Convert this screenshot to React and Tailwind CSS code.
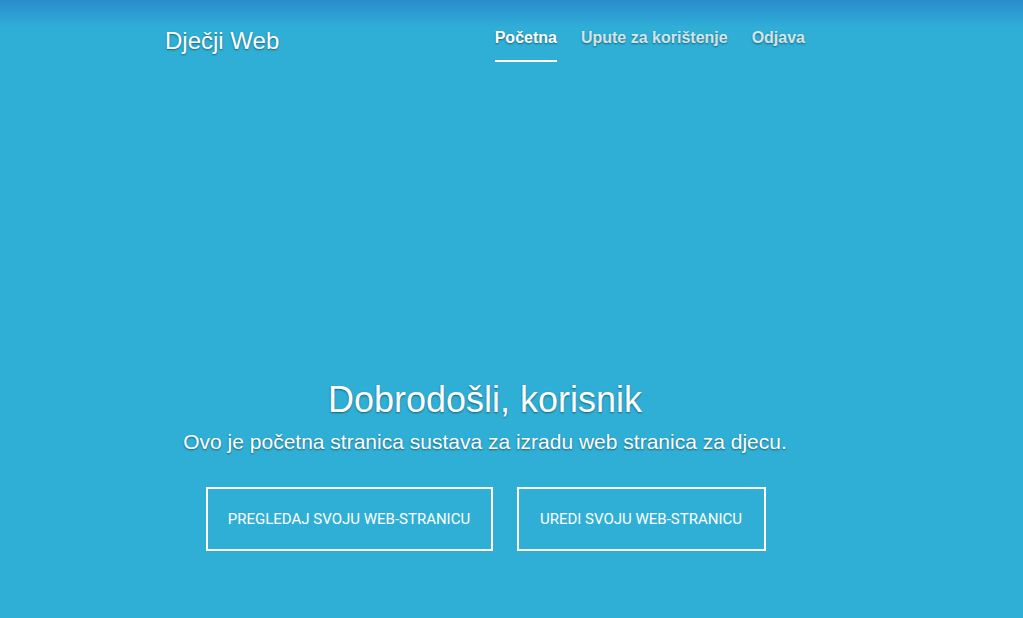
import React from "react";

// -------------------------------------

const navLinks = [
    { label: "Početna", active: true },
    { label: "Upute za korištenje", active: false },
    { label: "Odjava", active: false },
];

const App = () => {
    return (
        <div
            className="min-h-[618px] w-full bg-[#2fafd6] bg-[linear-gradient(to_bottom,#2a8ccf_0px,#2fafd6_28px,#2fafd6_100%)] text-white font-['Liberation_Sans',Arial,sans-serif] [text-shadow:0_1px_2px_rgba(0,0,0,0.45)]"
        >
            <div className="ml-[165px] w-[640px]">
                {/* Header */}
                <header className="flex items-start justify-between pt-[27px]">
                    <h3 className="text-[24px] leading-[28px]">Dječji Web</h3>
                    <nav className="flex gap-6">
                        {navLinks.map((link) => (
                            <a
                                key={link.label}
                                href="#"
                                className={
                                    link.active
                                        ? "text-white font-bold text-[16px] leading-[22px] pb-[11px] border-b-2 border-white"
                                        : "text-white/80 font-bold text-[16px] leading-[22px] pb-[11px] border-b-2 border-transparent"
                                }
                            >
                                {link.label}
                            </a>
                        ))}
                    </nav>
                </header>

                {/* Hero */}
                <main className="flex flex-col items-center mt-[316px]">
                    <h1 className="text-[36px] leading-[44px]">Dobrodošli, korisnik</h1>
                    <p className="text-[21px] leading-[28px] mt-[6px]">
                        Ovo je početna stranica sustava za izradu web stranica za djecu.
                    </p>
                    <div className="flex gap-[24px] mt-[31px] ml-[1px]">
                        <button className="w-[287px] h-[64px] border-2 border-white text-[15px] font-['Roboto',sans-serif] uppercase">
                            Pregledaj svoju web-stranicu
                        </button>
                        <button className="w-[249px] h-[64px] border-2 border-white text-[15px] font-['Roboto',sans-serif] uppercase">
                            Uredi svoju web-stranicu
                        </button>
                    </div>
                </main>
            </div>
        </div>
    );
};

export default App;
